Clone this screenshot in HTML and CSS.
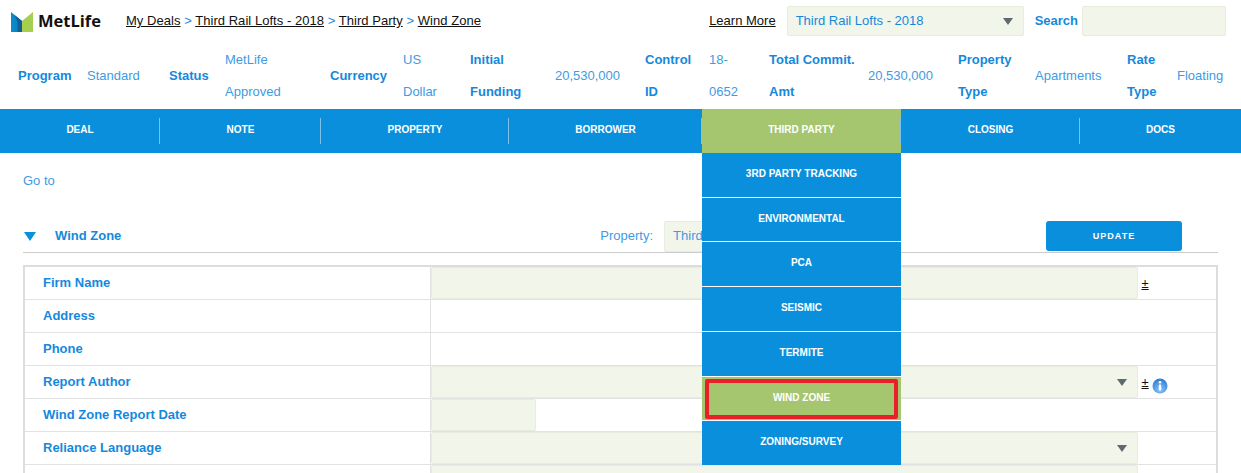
FILE: index.html
```html
<!DOCTYPE html>
<html lang="en">
<head>
<meta charset="utf-8">
<title>Wind Zone</title>
<link rel="stylesheet" href="styles.css">
</head>
<body>
<header class="topbar">
  <div class="logo">
    <svg class="logo-mark" width="22" height="20" viewBox="0 0 22 20">
      <defs>
        <linearGradient id="lg" x1="0" y1="0" x2="1" y2="0">
          <stop offset="0" stop-color="#0a8fc8"/>
          <stop offset="1" stop-color="#0d78c0"/>
        </linearGradient>
      </defs>
      <path d="M0 0 L11 9 V20 H0 Z" fill="url(#lg)"/>
      <path d="M22 0 V20 H11 V9 Z" fill="#a5cf4c"/>
      <path d="M3.500 3 L11 9 V20 H6.500 C7.500 13 6.500 7.500 3.500 3 Z" fill="#0f5f94"/>
    </svg>
    <span class="logo-text">MetLife</span>
  </div>
  <nav class="crumbs">
    <a href="#">My Deals</a> <span>&gt;</span> <a href="#">Third Rail Lofts - 2018</a> <span>&gt;</span> <a href="#">Third Party</a> <span>&gt;</span> <a href="#">Wind Zone</a>
  </nav>
  <div class="top-tools">
    <a href="#" class="learn">Learn More</a>
    <div class="field select deal-select">Third Rail Lofts - 2018</div>
    <b class="search-label">Search</b>
    <div class="field search-box"></div>
  </div>
</header>

<section class="summary">
  <b>Program</b><span>Standard</span>
  <b>Status</b><span>MetLife<br>Approved</span>
  <b>Currency</b><span>US<br>Dollar</span>
  <b>Initial<br>Funding</b><span>20,530,000</span>
  <b>Control<br>ID</b><span>18-<br>0652</span>
  <b>Total Commit.<br>Amt</b><span>20,530,000</span>
  <b>Property<br>Type</b><span>Apartments</span>
  <b>Rate<br>Type</b><span>Floating</span>
</section>

<nav class="mainnav">
  <a href="#" class="tab t1">Deal</a>
  <a href="#" class="tab t2">Note</a>
  <a href="#" class="tab t3">Property</a>
  <a href="#" class="tab t4">Borrower</a>
  <div class="tab t5 active">Third Party
    <div class="dropdown">
      <a href="#">3rd Party Tracking</a>
      <a href="#">Environmental</a>
      <a href="#">PCA</a>
      <a href="#">Seismic</a>
      <a href="#">Termite</a>
      <a href="#" class="current">Wind Zone<i class="marker"></i></a>
      <a href="#">Zoning/Survey</a>
    </div>
  </div>
  <a href="#" class="tab t6">Closing</a>
  <a href="#" class="tab t7">Docs</a>
</nav>

<main class="content">
  <a href="#" class="goto">Go to</a>
  <div class="section-head">
    <i class="caret"></i>
    <b class="section-title">Wind Zone</b>
    <span class="prop-label">Property:</span>
    <div class="field prop-select">Third</div>
    <button class="update">UPDATE</button>
  </div>
  <table class="form">
    <tr><th>Firm Name</th><td><div class="cell"><div class="field wide"></div><a href="#" class="pm">±</a></div></td></tr>
    <tr><th>Address</th><td></td></tr>
    <tr><th>Phone</th><td></td></tr>
    <tr><th>Report Author</th><td><div class="cell"><div class="field wide select"></div><a href="#" class="pm">±</a>
      <svg class="info" width="16" height="16" viewBox="0 0 16 16">
        <defs>
          <radialGradient id="ig" cx=".5" cy=".75" r=".7">
            <stop offset="0" stop-color="#8cc4f2"/>
            <stop offset="1" stop-color="#2f7fd6"/>
          </radialGradient>
        </defs>
        <circle cx="8" cy="8" r="7.500" fill="url(#ig)"/>
        <circle cx="8" cy="4.300" r="1.300" fill="#fff"/>
        <rect x="6.800" y="6.500" width="2.400" height="6" rx=".6" fill="#fff"/>
      </svg></div></td></tr>
    <tr><th>Wind Zone Report Date</th><td><div class="cell"><div class="field date"></div></div></td></tr>
    <tr><th>Reliance Language</th><td><div class="cell"><div class="field wide select"></div></div></td></tr>
    <tr><th></th><td><div class="cell"><div class="field wide"></div></div></td></tr>
  </table>
</main>
</body>
</html>
```
FILE: styles.css
```css
* { box-sizing: border-box; }
html, body { margin: 0; height: 100%; overflow: hidden; }
body {
  background: #fff;
  color: #1489dc;
  font: 13px/1.2 "Liberation Sans", Arial, sans-serif;
}
a { color: inherit; }

.topbar {
  display: flex;
  align-items: center;
  height: 42px;
  padding: 0 15px 0 11px;
}
.logo { display: flex; align-items: center; width: 115px; }
.logo-mark { flex: none; margin-top: 1px; }
.logo-text {
  margin-left: 5px;
  color: #111;
  font: 700 16.500px/1 "Open Sans", sans-serif;
}
.crumbs { color: #1489dc; white-space: nowrap; letter-spacing: .04px; }
.crumbs a { color: #111; }
.top-tools { display: flex; align-items: center; margin-left: auto; }
.learn { color: #111; margin-right: 11px; }
.field {
  position: relative;
  background: #f2f5ea;
  border: 1px solid #e8ecdc;
  border-radius: 2px;
}
.select::after {
  content: "";
  position: absolute;
  right: 10px;
  top: 50%;
  margin-top: -3px;
  border-style: solid;
  border-width: 7px 5px 0;
  border-color: #5f6a70 transparent transparent;
}
.deal-select {
  width: 237px;
  height: 30px;
  padding-left: 8px;
  line-height: 28px;
}
.search-label { margin: 0 4px 0 11px; }
.search-box { width: 144px; height: 30px; }

.summary {
  display: grid;
  grid-template-columns: 69px 82px 56px 105px 73px 67px 85px 90px 64px 60px 99px 90px 77px 92px 50px 50px;
  align-items: center;
  height: 67px;
  padding-left: 18px;
  line-height: 32px;
}
.summary span { color: #3f9be2; }

.mainnav {
  display: flex;
  height: 44px;
  background: #0a8fdc;
}
.tab {
  position: relative;
  display: block;
  padding-top: 15px;
  color: #fff;
  font-size: 10px;
  font-weight: 700;
  line-height: 12px;
  text-align: center;
  text-decoration: none;
  text-transform: uppercase;
}
.tab + .tab::before {
  content: "";
  position: absolute;
  left: -1px;
  top: 9px;
  width: 1px;
  height: 26px;
  background: #7dc0ea;
}
.t1 { width: 160px; }
.t2 { width: 161px; }
.t3 { width: 188px; }
.t4 { width: 193px; }
.t5 { width: 199px; }
.t6 { width: 179px; }
.t7 { flex: 1; }
.active { background: #a5c66f; }

.dropdown {
  position: absolute;
  left: 0;
  right: 0;
  top: 100%;
  z-index: 5;
  display: flex;
  flex-direction: column;
  gap: 1px;
  height: 312px;
  background: #fff;
}
.dropdown a {
  position: relative;
  flex: 1;
  padding-top: 15px;
  background: #0a8fdc;
  color: #fff;
  text-decoration: none;
}
.dropdown .current { background: #a5c66f; }
.marker {
  position: absolute;
  left: 3px;
  right: 3px;
  top: 2px;
  bottom: 1px;
  border: 4px solid #e9202a;
  border-radius: 2px;
}

.content { padding: 19px 23px 0; }
.goto { display: block; line-height: 18px; text-decoration: none; color: #3f9be2; }
.section-head {
  display: flex;
  align-items: center;
  height: 32px;
  margin-top: 31px;
  padding-bottom: 2px;
  border-bottom: 1px solid #ccc;
}
.caret {
  margin: 2px 0 0 1px;
  border-style: solid;
  border-width: 9px 6px 0;
  border-color: #0a8fdc transparent transparent;
}
.section-title { margin-left: 19px; }
.prop-label { margin-left: 479px; color: #3f9be2; }
.prop-select {
  align-self: flex-start;
  width: 220px;
  height: 31px;
  margin-left: 11px;
  padding-left: 8px;
  line-height: 27px;
  color: #3f9be2;
  white-space: nowrap;
}
.update {
  align-self: flex-start;
  width: 136px;
  height: 30px;
  margin: 0 36px 0 auto;
  padding: 1px 0 0;
  background: #0a8fdc;
  border: 0;
  border-radius: 3px;
  color: #fff;
  font: 700 9px/1 "Liberation Sans", Arial, sans-serif;
  letter-spacing: 1px;
}

.form {
  width: 100%;
  margin-top: 12px;
  border: 2px solid #ddd;
  border-collapse: collapse;
  table-layout: fixed;
}
.form tr { height: 33px; }
.form th, .form td {
  padding: 0;
  border: 1px solid #e2e2e2;
}
.form th {
  width: 406px;
  padding-left: 18px;
  text-align: left;
}
.cell { display: flex; align-items: center; height: 32px; }
.wide { width: 707px; height: 32px; }
.date { width: 105px; height: 32px; }
.pm { margin: 1px 0 0 4px; color: #111; font-size: 13px; }
.info { margin: 8px 0 0 3px; }
```
